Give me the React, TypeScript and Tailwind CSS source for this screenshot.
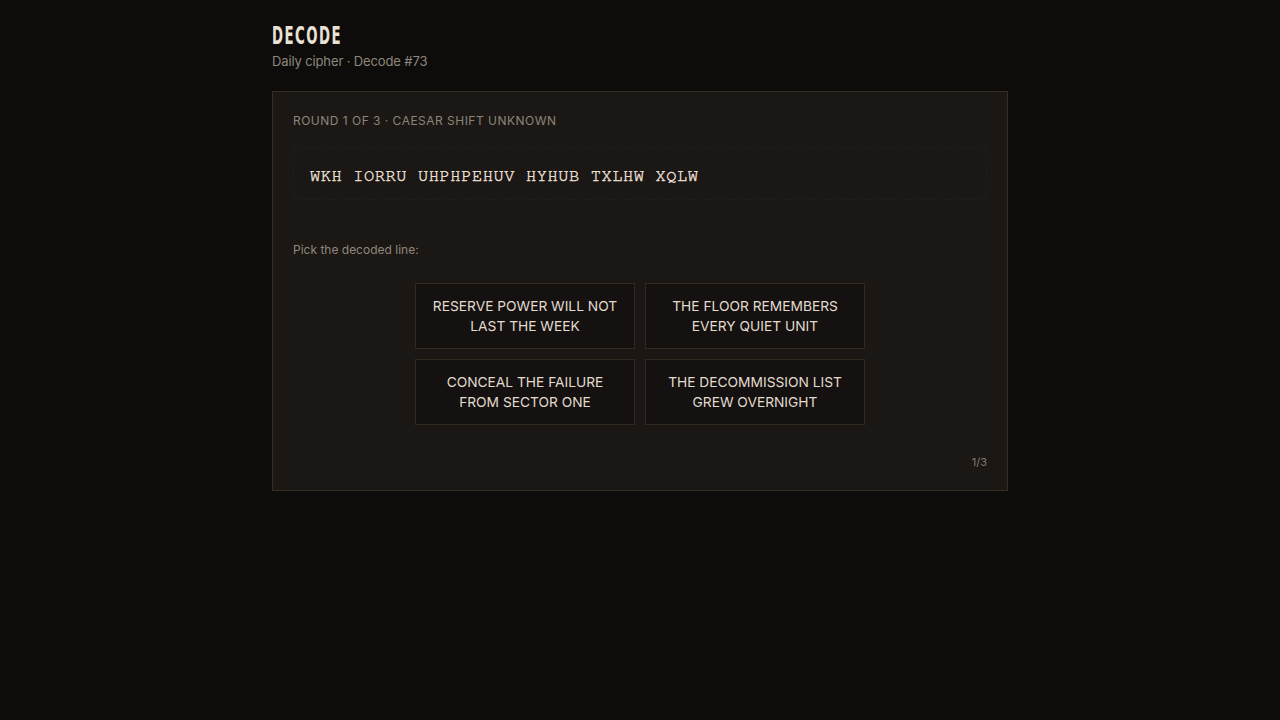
import React from 'react';

const options = [
  'Reserve power will not last the week',
  'The floor remembers every quiet unit',
  'Conceal the failure from sector one',
  'The decommission list grew overnight',
];

export default function App() {
  return (
    <div className="min-h-screen w-full bg-[#0e0c0b] text-[#e4ddd2] font-['Inter',sans-serif]">
      <div className="mx-auto w-[736px] pt-[22px]">
        {/* header */}
        <header>
          <h1 className="inline-block origin-left scale-x-[0.59] font-['DejaVu_Sans_Condensed',sans-serif] text-[25px] leading-[28px] font-bold tracking-[0.1em] text-[#e9e2d4]">
            DECODE
          </h1>
          <p className="mt-[2px] text-[13px] leading-[18px] tracking-[-0.01em] text-[#8f877c]">Daily cipher · Decode #73</p>
        </header>

        <section className="mt-[21px] border border-[#362d23] bg-[#1b1714] px-5 pt-[21px] pb-5">
          <p className="text-[12px] leading-4 tracking-[0.04em] uppercase text-[#8d857a]">
            Round 1 of 3 · Caesar shift unknown
          </p>

          <div className="mt-[19px] border border-dashed border-white/[0.025] px-4 pt-[17px] pb-[13px]">
            <p className="font-['Nimbus_Mono_PS','FreeMono','Courier','Liberation_Mono',monospace] text-[17px] leading-[20px] tracking-[0.035em] text-[#e6dfd2] [-webkit-text-stroke:0.45px_#e6dfd2]">
              WKH IORRU UHPHPEHUV HYHUB TXLHW XQLW
            </p>
          </div>

          <p className="mt-[42px] text-[12px] leading-4 text-[#8f877c]">Pick the decoded line:</p>

          <div className="mx-auto mt-[25px] grid w-[450px] grid-cols-2 gap-[10px]">
            {options.map((o) => (
              <button
                key={o}
                className="flex h-[66px] items-center justify-center border border-[#33291f] bg-[#141110] px-3 text-center text-[13.75px] leading-5 uppercase text-[#e2dbcf]"
              >
                {o}
              </button>
            ))}
          </div>

          <p className="mt-[29px] text-right text-[11px] leading-4 text-[#857d72]">1/3</p>
        </section>
      </div>
    </div>
  );
}
